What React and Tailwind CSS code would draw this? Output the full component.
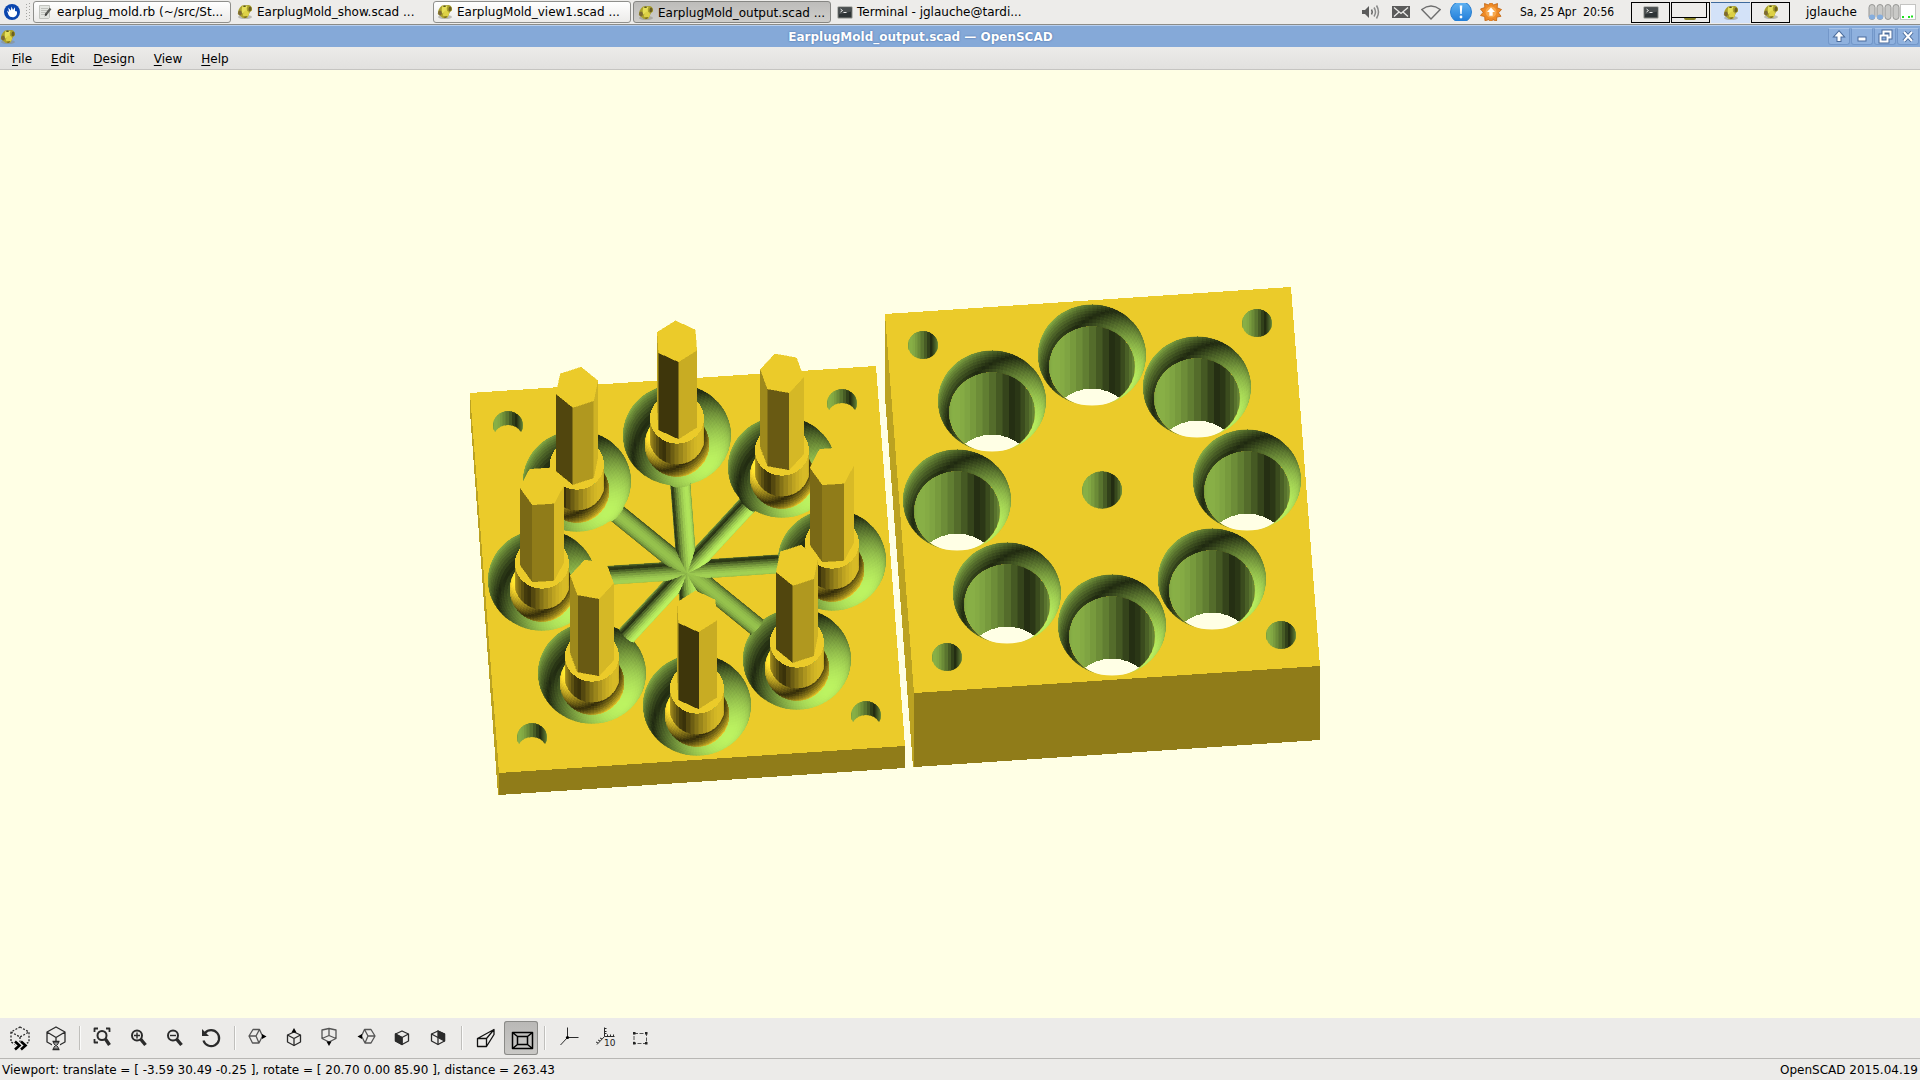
import React from 'react';

/* ------------------------------------------------------------------ */
/* Orthographic scene: x right, y into the scene, z up                 */
/* ------------------------------------------------------------------ */

const TILT = (20.7 * Math.PI) / 180;
const C = Math.cos(TILT);
const S = Math.sin(TILT);
const YELLOW = [249, 215, 44];
const GREEN = [157, 203, 81];
const PAPER = '#ffffe5';

const toEye = ([x, y, z]) => [x, y * C + z * S, -y * S + z * C];

function shade(normal, base) {
  const [x, y, z] = toEye(normal);
  const light = 0.2 + Math.abs(-x + y + z) / Math.sqrt(3);
  const rgb = base.map((v) => Math.min(255, Math.round(v * light)));
  return `rgb(${rgb.join(',')})`;
}

const project = ([x, y, z]) => [x, -y * C - z * S];
const points = (list) =>
  list.map((p) => project(p).map((v) => v.toFixed(2)).join(',')).join(' ');

const rad = (deg) => (deg * Math.PI) / 180;

/* Wall of a cylinder; inside = looking at its inner face */
function cylinder(r, z0, z1, n, base, inside) {
  const out = [];
  for (let i = 0; i < n; i++) {
    const a = rad((i * 360) / n + 4.1);
    const b = rad(((i + 1) * 360) / n + 4.1);
    const m = (a + b) / 2;
    const k = inside ? -1 : 1;
    const normal = [k * Math.cos(m), k * Math.sin(m), 0];
    if (toEye(normal)[2] <= 0) continue;
    out.push({
      fill: shade(normal, base),
      pts: points([
        [r * Math.cos(a), r * Math.sin(a), z0],
        [r * Math.cos(b), r * Math.sin(b), z0],
        [r * Math.cos(b), r * Math.sin(b), z1],
        [r * Math.cos(a), r * Math.sin(a), z1],
      ]),
    });
  }
  return out;
}

/* Part of a sphere between two latitudes (degrees) */
function sphere(r, cz, lat0, lat1, rings, n, base, inside) {
  const out = [];
  const k = inside ? -1 : 1;
  for (let j = 0; j < rings; j++) {
    const p = rad(lat0 + ((lat1 - lat0) * j) / rings);
    const q = rad(lat0 + ((lat1 - lat0) * (j + 1)) / rings);
    const pm = (p + q) / 2;
    for (let i = 0; i < n; i++) {
      const a = rad((i * 360) / n + 4.1);
      const b = rad(((i + 1) * 360) / n + 4.1);
      const m = (a + b) / 2;
      const normal = [
        k * Math.cos(pm) * Math.cos(m),
        k * Math.cos(pm) * Math.sin(m),
        k * Math.sin(pm),
      ];
      if (toEye(normal)[2] <= 0) continue;
      const at = (lat, lon) => [
        r * Math.cos(lat) * Math.cos(lon),
        r * Math.cos(lat) * Math.sin(lon),
        cz + r * Math.sin(lat),
      ];
      out.push({
        fill: shade(normal, base),
        pts: points([at(p, a), at(p, b), at(q, b), at(q, a)]),
      });
    }
  }
  return out;
}

/* Half pipe running from the hub to a cup; neighbours meet in a mitre */
function channel(deg, r, end) {
  const out = [];
  const n = 14;
  const dir = [Math.cos(rad(deg)), Math.sin(rad(deg))];
  const side = [-dir[1], dir[0]];
  const mitre = 1 / Math.tan(rad(22.5));
  const at = (along, t) => {
    const d = r * Math.cos(t);
    return [
      dir[0] * along + side[0] * d,
      dir[1] * along + side[1] * d,
      -r * Math.sin(t),
    ];
  };
  for (let i = 0; i < n; i++) {
    const t0 = (Math.PI * i) / n;
    const t1 = (Math.PI * (i + 1)) / n;
    const m = (t0 + t1) / 2;
    const normal = [-side[0] * Math.cos(m), -side[1] * Math.cos(m), Math.sin(m)];
    if (toEye(normal)[2] <= 0) continue;
    const s0 = Math.abs(r * Math.cos(t0)) * mitre;
    const s1 = Math.abs(r * Math.cos(t1)) * mitre;
    out.push({
      fill: shade(normal, GREEN),
      pts: points([at(s0, t0), at(end, t0), at(end, t1), at(s1, t1)]),
    });
  }
  return out;
}

/* Hexagonal prism with one vertex pointing along deg */
function hexagon(deg, r, z0, z1) {
  const v = [0, 1, 2, 3, 4, 5].map((i) => {
    const a = rad(deg + i * 60);
    return [r * Math.cos(a), r * Math.sin(a)];
  });
  const out = [];
  for (let i = 0; i < 6; i++) {
    const a = v[i];
    const b = v[(i + 1) % 6];
    const m = rad(deg + i * 60 + 30);
    const normal = [Math.cos(m), Math.sin(m), 0];
    if (toEye(normal)[2] <= 0) continue;
    out.push({
      fill: shade(normal, YELLOW),
      pts: points([[...a, z0], [...b, z0], [...b, z1], [...a, z1]]),
    });
  }
  out.push({ fill: shade([0, 0, 1], YELLOW), pts: points(v.map((p) => [...p, z1])) });
  return out;
}

const TOP = shade([0, 0, 1], YELLOW);
const turn = rad(4.1);
const FRONT = shade([Math.sin(turn), -Math.cos(turn), 0], YELLOW);
const SIDE = shade([-Math.cos(turn), -Math.sin(turn), 0], YELLOW);

const SPOKES = [0, 1, 2, 3, 4, 5, 6, 7].map((i) => 4.1 + i * 45);
const RING = SPOKES.map((deg) => {
  const [x, y] = project([145 * Math.cos(rad(deg)), 145 * Math.sin(rad(deg)), 0]);
  return { deg, x: Math.round(x), y: Math.round(y) };
}).sort((a, b) => a.y - b.y);
const CORNERS = [
  { x: -179, y: -145 },
  { x: 155, y: -167 },
  { x: -155, y: 167 },
  { x: 179, y: 145 },
];

const CUP = sphere(54, 0, -90, 0, 20, 80, GREEN, true);
const POCKET = sphere(54, 0, -37, 0, 8, 80, GREEN, true);
const BORE = cylinder(43, -209, -32, 40, GREEN, true);
const DRILL = cylinder(15, -209, 0, 30, GREEN, true);
const DRILL_MID = cylinder(20, -209, 0, 30, GREEN, true);
const BULB = sphere(32, -27, -90, 40, 22, 60, YELLOW, false);
const COLLAR = cylinder(27, -11, 47, 40, YELLOW, false);

/* The thin outline in the facet's own colour closes hairline gaps */
const Facets = ({ list }) =>
  list.map((f, i) => (
    <polygon key={i} points={f.pts} fill={f.fill} stroke={f.fill} strokeWidth=".5" />
  ));

function Scene() {
  return (
    <svg
      className="block h-full w-full"
      viewBox="0 70 1920 948"
      shapeRendering="crispEdges"
      role="img"
      aria-label="Rendered model of the earplug mold"
    >
      <defs>
        <clipPath id="mouth">
          <ellipse rx="54" ry={54 * C} />
        </clipPath>
        <clipPath id="throat">
          <ellipse cy={32 * S} rx="43" ry={43 * C} />
        </clipPath>
        <clipPath id="drill">
          <ellipse rx="15" ry={15 * C} />
        </clipPath>
        <clipPath id="crescent">
          <path d="M-13 7A15 14 0 1 1 13 7A15 14 0 0 0 -13 7Z" />
        </clipPath>
        <clipPath id="drillMid">
          <ellipse rx="20" ry={20 * C} />
        </clipPath>
        <clipPath id="carved">
          {RING.map((p) => (
            <ellipse key={p.deg} cx={p.x} cy={p.y} rx="54" ry={54 * C} />
          ))}
          {SPOKES.map((deg) => {
            const c = Math.cos(rad(deg));
            const s = Math.sin(rad(deg));
            const r = 10;
            return (
              <polygon
                key={deg}
                points={points([
                  [s * r, -c * r, 0],
                  [c * 110 + s * r, s * 110 - c * r, 0],
                  [c * 110 - s * r, s * 110 + c * r, 0],
                  [-s * r, c * r, 0],
                ])}
              />
            );
          })}
        </clipPath>
        <g id="cup">
          <Facets list={CUP} />
        </g>
        <g id="pocket">
          <g clipPath="url(#mouth)">
            <Facets list={POCKET} />
            <g clipPath="url(#throat)">
              <Facets list={BORE} />
              <ellipse cy={209 * S} rx="43" ry={43 * C} fill={PAPER} />
            </g>
          </g>
        </g>
        <g id="through" clipPath="url(#drill)">
          <Facets list={DRILL} />
        </g>
        <g id="blind" clipPath="url(#crescent)">
          <Facets list={DRILL} />
        </g>
        <g id="base">
          <Facets list={BULB} />
          <Facets list={COLLAR} />
          <ellipse cy={-47 * S} rx="27" ry={27 * C} fill={TOP} />
        </g>
      </defs>

      {/* lower half with cores */}
      <polygon points="470,393 499,773 499,795 498,795 470,412" fill={SIDE} />
      <polygon points="499,773 905,746 905,768 499,795" fill={FRONT} />
      <polygon points="470,393 876,366 905,746 499,773" fill={TOP} />
      <g transform="translate(687 570)">
        {CORNERS.map((p) => (
          <use key={`${p.x}`} href="#blind" x={p.x} y={p.y} />
        ))}
        <g clipPath="url(#carved)">
          {RING.map((p) => (
            <use key={p.deg} href="#cup" x={p.x} y={p.y} />
          ))}
          {SPOKES.map((deg) => (
            <Facets key={deg} list={channel(deg, 10, 92)} />
          ))}
        </g>
        {RING.map((p) => (
          <g key={p.deg} transform={`translate(${p.x} ${p.y})`}>
            <use href="#base" />
            <Facets list={hexagon(p.deg, 22, 47, 265)} />
          </g>
        ))}
      </g>

      {/* upper half with pockets */}
      <polygon points="885,313 914,693 914,767 913,767 885,397" fill={SIDE} />
      <polygon points="914,693 1320,666 1320,740 914,767" fill={FRONT} />
      <polygon points="885,314 1291,287 1320,666 914,693" fill={TOP} />
      <g transform="translate(1102 490)">
        {CORNERS.map((p) => (
          <use key={`${p.x}`} href="#through" x={p.x} y={p.y} />
        ))}
        <g clipPath="url(#drillMid)">
          <Facets list={DRILL_MID} />
        </g>
        {RING.map((p) => (
          <use key={p.deg} href="#pocket" x={p.x} y={p.y} />
        ))}
      </g>
    </svg>
  );
}

/* ------------------------------------------------------------------ */
/* Small icons                                                         */
/* ------------------------------------------------------------------ */

const ScadIcon = () => (
  <svg className="h-4 w-4 shrink-0" viewBox="0 0 16 16">
    <ellipse cx="8" cy="13" rx="7" ry="2" fill="#8a8a80" opacity=".5" />
    <path d="M5 1.500L12 1Q15.500 2 15 6.500L13 8 10.500 13.500Q6 15.500 4 12.500L.8 10Q.8 4.500 5 1.500Z" fill="#aaa12c" />
    <path d="M5.500 2L10.500 2Q9 4 10 7L5 9.500Q4 5 5.500 2Z" fill="#e6df58" />
    <ellipse cx="3" cy="9" rx="1.900" ry="2.400" fill="#7d6a35" transform="rotate(-15 3 9)" />
    <ellipse cx="9" cy="10" rx="2.800" ry="3.400" fill="#ddd145" transform="rotate(25 9 10)" />
    <ellipse cx="13" cy="5" rx="1.500" ry="2.400" fill="#6c5f22" transform="rotate(10 13 5)" />
    <path d="M6.500 12.500L10.500 12 9 14Q7.500 14.500 6.500 12.500Z" fill="#7d7020" />
    <ellipse cx="7.500" cy="2.200" rx="1.500" ry=".7" fill="#55501a" />
  </svg>
);

const TerminalIcon = () => (
  <svg className="h-4 w-4 shrink-0" viewBox="0 0 16 16">
    <rect x=".5" y="2.500" width="15" height="12" rx="1" fill="#888a85" />
    <rect x="1.500" y="3.500" width="13" height="10" fill="#2e3436" />
    <path d="M1.500 3.500h13v4l-13 3z" fill="#4a4f50" />
    <path d="M3.500 5l2 1.500-2 1.500M6.500 8.500h3" stroke="#eee" fill="none" />
  </svg>
);

const NoteIcon = () => (
  <svg className="h-4 w-4 shrink-0" viewBox="0 0 16 16">
    <path d="M2.500 1.500h10v12l-1 1h-9z" fill="#e4e6e2" stroke="#c2c4bf" />
    <path d="M4 4.500h7M4 6.500h7M4 8.500h5M4 10.500h4" stroke="#c0c2bd" />
    <path d="M13.500 4.500L8.500 11" stroke="#5a5c58" strokeWidth="2.200" />
    <path d="M8.800 9.500L7.500 12.500 10.200 10.800Z" fill="#333" />
  </svg>
);

const MouseIcon = () => (
  <svg className="h-4 w-4" viewBox="0 0 16 16">
    <circle cx="8" cy="8" r="8" fill="#0b46ae" />
    <path d="M3 6.500L5 8 4.300 3.500 6.800 6.500 7.500 2.500 9 6 11 3.300 11 7 13 7.500Q13.500 12 9.500 13.300 5.500 13.500 4.500 11Z" fill="#fff" />
  </svg>
);

const Speaker = () => (
  <svg className="h-5 w-5" viewBox="0 0 20 20" fill="none" stroke="#666" strokeWidth="1.500">
    <path d="M1 8h3l4-4v12l-4-4H1z" fill="#5c5c5c" stroke="none" />
    <path d="M10.500 7.500q1.500 2.500 0 5" />
    <path d="M13 5.500q3 4.500 0 9" stroke="#888" />
    <path d="M15.500 3.500q4 6.500 0 13" stroke="#888" />
  </svg>
);

const Mail = () => (
  <svg className="h-5 w-5" viewBox="0 0 20 20">
    <rect x="1" y="4" width="18" height="12" fill="#5a5a5a" />
    <path d="M3 5.500l7 6 7-6M3 14.500l5-4.500M17 14.500l-5-4.500" stroke="#ececea" strokeWidth="1.300" fill="none" />
  </svg>
);

const Wifi = () => (
  <svg className="h-5 w-5" viewBox="0 0 20 20">
    <path d="M.8 7.500Q10 .5 19.200 7.500L10 17z" fill="none" stroke="#6e6e6e" strokeWidth="1.400" />
  </svg>
);

const Alert = () => (
  <svg className="h-[18px] w-[22px]" viewBox="0 0 22 18">
    <defs>
      <linearGradient id="alertBlue" x2="0" y2="1">
        <stop stopColor="#63b4f2" />
        <stop offset="1" stopColor="#1c7ad8" />
      </linearGradient>
    </defs>
    <circle cx="11" cy="9" r="10.500" fill="url(#alertBlue)" stroke="#2a7fd0" />
    <path d="M9.700 2.500h2.600l-.6 8.500h-1.400z" fill="#fff" />
    <circle cx="11" cy="14" r="1.400" fill="#fff" />
  </svg>
);

const Update = () => (
  <svg className="h-[18px] w-[22px]" viewBox="0 0 22 18">
    <path d="M11 -1l2.500 3 4-1.500-.3 4.300 4.300 1.700-3 3.300 2.500 3.500-4.200.8-.3 4.200-3.700-1.800L11 19.500l-2-3-4 1.300-.3-4.200L.5 12.500l2.700-3.200L.5 6l4.300-1.500L4.500.5l4 1.500z" fill="#ee8a26" stroke="#c0620c" strokeWidth=".8" />
    <circle cx="11" cy="9" r="5.500" fill="#f7a94f" />
    <path d="M11 4.500l4 4.500h-2.300v3.800H9.300V9H7z" fill="#fff" />
  </svg>
);

/* ------------------------------------------------------------------ */
/* Top panel                                                           */
/* ------------------------------------------------------------------ */

const TASKS = [
  { label: 'earplug_mold.rb (~/src/St...', icon: NoteIcon, kind: 'raised' },
  { label: 'EarplugMold_show.scad ...', icon: ScadIcon, kind: 'flat' },
  { label: 'EarplugMold_view1.scad ...', icon: ScadIcon, kind: 'raised' },
  { label: 'EarplugMold_output.scad ...', icon: ScadIcon, kind: 'active' },
  { label: 'Terminal - jglauche@tardi...', icon: TerminalIcon, kind: 'flat' },
];

const TASK_STYLE = {
  raised: 'border-[#8f8f8c] bg-linear-to-b from-white to-[#ecebe9] pl-[3px]',
  flat: 'border-transparent pl-[3px]',
  active: 'border-[#868683] bg-linear-to-b from-[#bdbcba] to-[#cfcecb] pt-px pl-1',
};

function Task({ label, icon: Icon, kind }) {
  return (
    <button
      className={`flex h-[22px] w-[198px] items-center gap-1 overflow-hidden rounded-[3px] border text-left whitespace-nowrap ${TASK_STYLE[kind]}`}
    >
      <Icon />
      <span>{label}</span>
    </button>
  );
}

function Meter() {
  return (
    <svg className="h-4 w-12" viewBox="0 0 48 16">
      {[0, 8, 16, 24].map((x) => (
        <rect key={x} x={x + 1} y=".5" width="6" height="15" rx="3" fill="#c9c9c7" stroke="#979795" />
      ))}
      <ellipse cx="4" cy="13" rx="3" ry="2.500" fill="#86aede" />
      <ellipse cx="12" cy="13" rx="3" ry="2.500" fill="#86aede" />
      <rect x="32.500" y=".5" width="15" height="15" fill="#fff" stroke="#c4c4c2" />
      <path d="M34 13h2M40 13h2M43 12.500h2" stroke="#1ee01e" strokeWidth="2" />
    </svg>
  );
}

const TRAY = [Speaker, Mail, Wifi, Alert, Update];

function Panel() {
  return (
    <header className="flex h-[25px] items-center border-b border-[#8c8c88] bg-[#edecea]">
      <button className="ml-1 flex h-4 w-4" aria-label="Applications">
        <MouseIcon />
      </button>
      <svg className="mr-[2px] ml-1.5 h-[18px] w-[5px]" viewBox="0 0 5 18">
        {[0, 3, 6, 9, 12, 15].map((y) => (
          <path key={y} d={`M0 ${y + 1.5}h1M3 ${y + 0.5}h1`} stroke="#a5a5a2" />
        ))}
      </svg>
      <nav className="flex flex-1 gap-[2px]">
        {TASKS.map((t) => (
          <Task key={t.label} {...t} />
        ))}
      </nav>
      <div className="flex items-center pr-[14px]">
        {TRAY.map((Icon, i) => (
          <div key={i} className="flex w-[30px] justify-center">
            <Icon />
          </div>
        ))}
      </div>
      <time className="w-[97px] font-['DejaVu_Sans_Condensed','DejaVu_Sans',sans-serif] whitespace-pre">
        Sa, 25 Apr  20:56
      </time>
      <div className="ml-[14px] flex h-[21px] gap-px">
        <button className="flex w-[39px] items-center justify-center border border-black" aria-label="Workspace 1">
          <TerminalIcon />
        </button>
        <button className="flex w-[39px] flex-col items-start border border-black" aria-label="Workspace 2">
          <span className="h-[15px] w-[35px] border-r border-b border-black" />
          <span className="ml-3 h-[2px] w-3 rounded-b-full bg-[#8a8424]" />
        </button>
        <button className="flex w-[39px] items-center justify-center border-t border-[#3f6a9c] bg-[#d3e2f8]" aria-label="Workspace 3">
          <ScadIcon />
        </button>
        <button className="flex w-[39px] items-center justify-center border border-black" aria-label="Workspace 4">
          <ScadIcon />
        </button>
      </div>
      <button className="mr-[11px] ml-4 w-[51px] text-left">jglauche</button>
      <div className="pr-1">
        <Meter />
      </div>
    </header>
  );
}

/* ------------------------------------------------------------------ */
/* Window chrome                                                       */
/* ------------------------------------------------------------------ */

const WINDOW_BUTTONS = [
  { label: 'Shade', d: 'M9 2.500L13.500 7.500H10.500V12H7.500V7.500H4.500Z', solid: true },
  { label: 'Minimize', d: 'M5.500 8.500h7v3h-7z', solid: true },
  { label: 'Restore', d: 'M7.500 7V2.500h7v6H12M4.500 6.500h7v6h-7z' },
  { label: 'Close', d: 'M5 3l8 9M13 3l-8 9' },
];

function TitleBar() {
  return (
    <div className="flex h-[22px] items-center border-t border-[#b9d0ef] bg-[#85a9d8] pr-px text-white">
      <ScadIcon />
      <h1 className="flex-1 pr-[3px] text-center font-bold [text-shadow:0_0_2px_#3c629c]">
        EarplugMold_output.scad — OpenSCAD
      </h1>
      <div className="flex gap-px">
        {WINDOW_BUTTONS.map((b) => (
          <button
            key={b.label}
            aria-label={b.label}
            className="flex h-[17px] w-[22px] items-center justify-center rounded-b-[3px] border border-[#7397c9] border-t-[#a9c4e8] bg-[#8fb1de]"
          >
            <svg className="h-[15px] w-[18px]" viewBox="0 0 18 15" fill="none">
              <path d={b.d} stroke="#4a6b9b" strokeWidth={b.solid ? 2 : 4} />
              <path d={b.d} stroke="#fff" strokeWidth={b.solid ? 0 : 2} fill={b.solid ? '#fff' : 'none'} />
            </svg>
          </button>
        ))}
      </div>
    </div>
  );
}

function MenuBar() {
  return (
    <nav className="flex h-[23px] items-center gap-[3px] border-b border-[#c5c4c1] bg-linear-to-b from-[#ecebe9] to-[#e2e1df] pt-px pl-1">
      {['File', 'Edit', 'Design', 'View', 'Help'].map((m) => (
        <button key={m} className="px-2">
          <span className="underline underline-offset-2">{m[0]}</span>
          {m.slice(1)}
        </button>
      ))}
    </nav>
  );
}

/* ------------------------------------------------------------------ */
/* View toolbar                                                        */
/* ------------------------------------------------------------------ */

const INK = '#2b2b2b';
const Glyph = ({ children }) => (
  <svg className="h-[34px] w-[34px]" viewBox="0 0 34 34" fill="none" stroke={INK} strokeWidth="1.300" strokeLinejoin="round">
    {children}
  </svg>
);

const Lens = ({ x, r, sign }) => (
  <>
    <circle cx={x} cy="14.500" r={r} strokeWidth="2" />
    <path d={`M${x + r * 0.75} ${14.5 + r * 0.75}L23.500 24`} strokeWidth="3.400" />
    {sign && <path d={sign} strokeWidth="1.400" />}
  </>
);

/* Small cube whose outline starts at (x, y) */
const Cube = ({ x, y, children }) => (
  <g transform={`translate(${x} ${y})`}>
    {children}
    <path d="M7 0L13.500 3V10L7 13.500 .5 10V3Z" />
    <path d="M.5 3L7 6.500 13.500 3M7 6.500v7" />
  </g>
);

const TOOL_GROUPS = [
  [
    {
      label: 'Preview',
      art: (
        <>
          <path d="M17 6l9 5v10l-9 5-9-5V11z" strokeDasharray="2 1.500" />
          <path d="M8 11l9 5 9-5M17 16v5" strokeDasharray="2 1.500" />
          <path d="M12 20.500l4.500 4-4.500 4M18 20.500l4.500 4-4.500 4" stroke="#ecebe9" strokeWidth="5" />
          <path d="M12 20.500l4.500 4-4.500 4M18 20.500l4.500 4-4.500 4" stroke="#000" strokeWidth="2.600" strokeLinejoin="miter" />
        </>
      ),
    },
    {
      label: 'Render',
      art: (
        <>
          <path d="M17 6l9 5v10l-9 5-9-5V11zM8 11l9 5.500 9-5.500M17 16.500v5" />
          <path d="M13 20.500h8v9h-8z" fill="#ecebe9" stroke="none" />
          <path d="M13.500 20.500h7M13.500 28.500h7" strokeWidth="1.500" />
          <path d="M14.500 21q0 2 2 3.500-2 1.500-2 3.500h5q0-2-2-3.500 2-1.500 2-3.500z" fill="#999" strokeWidth="1" />
        </>
      ),
    },
  ],
  [
    {
      label: 'View All',
      art: (
        <>
          <path d="M8.500 11V7.500H12M20 7.500h3.500V11M8.500 18v3.500H12" strokeWidth="1.800" />
          <Lens x={16} r={4.5} />
        </>
      ),
    },
    { label: 'Zoom In', art: <Lens x={15} r={5} sign="M12 14.500h6M15 11.500v6" /> },
    { label: 'Zoom Out', art: <Lens x={15} r={5} sign="M12 14.500h6" /> },
    {
      label: 'Reset View',
      art: (
        <>
          <path d="M11 12a8 8 0 1 1-1.500 7.500" strokeWidth="2.200" />
          <path d="M8 8v7h7z" fill={INK} stroke="none" />
        </>
      ),
    },
  ],
  [
    {
      label: 'Right',
      art: (
        <>
          <path d="M12 8.500h6.500l3 6.500-3.500 7H11.500L8 15zM8 15h7l3.500-6.500M15 15l3 7" stroke="#555" />
          <path d="M21 13l4.500 2.500-4.500 2.500z" fill="#000" stroke="none" />
        </>
      ),
    },
    {
      label: 'Top',
      art: (
        <>
          <Cube x={10} y={11} />
          <path d="M17 7l2.500 4.500h-5z" fill="#000" stroke="none" />
        </>
      ),
    },
    {
      label: 'Bottom',
      art: (
        <>
          <path d="M9 9l7-1.500L23 9v8.500l-7 3.500-7-3.500zM9 17.500l7-3 7 3M16 7.500v7" stroke="#555" />
          <path d="M16 25l2.500-4.500h-5z" fill="#000" stroke="none" />
        </>
      ),
    },
    {
      label: 'Left',
      art: (
        <>
          <path d="M22 8.500h-6.500l-3 6.500 3.500 7h6l4-7zM26 15h-7l-3.500-6.500M19 15l-3 7" stroke="#555" />
          <path d="M13 13l-4.500 2.500 4.500 2.500z" fill="#000" stroke="none" />
        </>
      ),
    },
    {
      label: 'Front',
      art: (
        <Cube x={10} y={10}>
          <path d="M.5 3L7 6.500v7L.5 10z" fill={INK} />
        </Cube>
      ),
    },
    {
      label: 'Back',
      art: (
        <Cube x={10} y={10}>
          <path d="M7 0l6.500 3v7L7 6.500z" fill={INK} />
        </Cube>
      ),
    },
  ],
  [
    {
      label: 'Perspective',
      art: <path d="M9.500 17.500h9V25.500h-9zM9.500 17.500L26 8.500 18.500 17.500M26 8.500v5L18.500 25.500" stroke="#111" />,
    },
    {
      label: 'Orthogonal',
      pressed: true,
      art: <path d="M8.500 11.500h20v16h-20zM13.500 15.500h10v8h-10zM8.500 11.500l5 4M28.500 11.500l-5 4M8.500 27.500l5-4M28.500 27.500l-5-4" stroke="#000" strokeWidth="1.500" />,
    },
  ],
  [
    {
      label: 'Show Axes',
      art: (
        <>
          <path d="M16.500 6.500v10h11M16.500 16.500L9.500 24" strokeWidth="1" />
          <circle cx="16.500" cy="16.500" r="1.600" fill="#000" stroke="none" />
        </>
      ),
    },
    {
      label: 'Show Scale Markers',
      art: (
        <>
          <path d="M17.500 6.500v9h10M17.500 15.500L10 23.500M17.500 7.500h2M17.500 10.500h2M17.500 12.500h2M20.500 15.500v-2M23.500 15.500v-2M26.500 15.500v-2M15 18l-2-1M13 20l-2-1M11 22l-2-1" strokeWidth="1" />
          <text x="17" y="25" fontSize="9" fill="#222" stroke="none">10</text>
        </>
      ),
    },
    {
      label: 'Show Crosshairs',
      art: (
        <>
          <path d="M11 12.500h12.500v10H11z" strokeDasharray="4 1.500" strokeWidth="1" stroke="#555" />
          <path d="M10 11h2.500v2.500H10zM22 11h2.500v2.500H22zM10 21h2.500v2.500H10zM22 21h2.500v2.500H22z" fill="#222" stroke="none" />
        </>
      ),
    },
  ],
];

function Toolbar() {
  return (
    <div className="flex h-10 items-center bg-[#ecebe9] pl-[2px]">
      {TOOL_GROUPS.map((group, i) => (
        <React.Fragment key={i}>
          {i > 0 && (
            <div className="flex w-[11px] justify-center">
              <span className="h-6 w-[2px] border-r border-l border-l-[#c0bfbc] border-r-[#fbfbfa]" />
            </div>
          )}
          {group.map((t) => (
            <button
              key={t.label}
              aria-label={t.label}
              aria-pressed={!!t.pressed}
              className={`mx-px flex h-[34px] w-[34px] items-center justify-center rounded-[3px] ${
                t.pressed ? 'bg-linear-to-b from-[#b9b8b6] to-[#cac9c6] ring-1 ring-[#8b8b88] ring-inset' : ''
              }`}
            >
              <Glyph>{t.art}</Glyph>
            </button>
          ))}
        </React.Fragment>
      ))}
    </div>
  );
}

function StatusBar() {
  return (
    <footer className="flex h-[22px] items-center justify-between border-t border-[#b8b7b4] bg-[#ecebe9] px-[2px]">
      <span>
        Viewport: translate = [ -3.59 30.49 -0.25 ], rotate = [ 20.70 0.00 85.90 ], distance = 263.43
      </span>
      <span>OpenSCAD 2015.04.19</span>
    </footer>
  );
}

export default function App() {
  return (
    <div className="flex h-screen flex-col overflow-hidden bg-[#ecebe9] font-['DejaVu_Sans',sans-serif] text-xs leading-4 text-black">
      <Panel />
      <TitleBar />
      <MenuBar />
      <main className="min-h-0 flex-1 bg-[#ffffe5]">
        <Scene />
      </main>
      <Toolbar />
      <StatusBar />
    </div>
  );
}
